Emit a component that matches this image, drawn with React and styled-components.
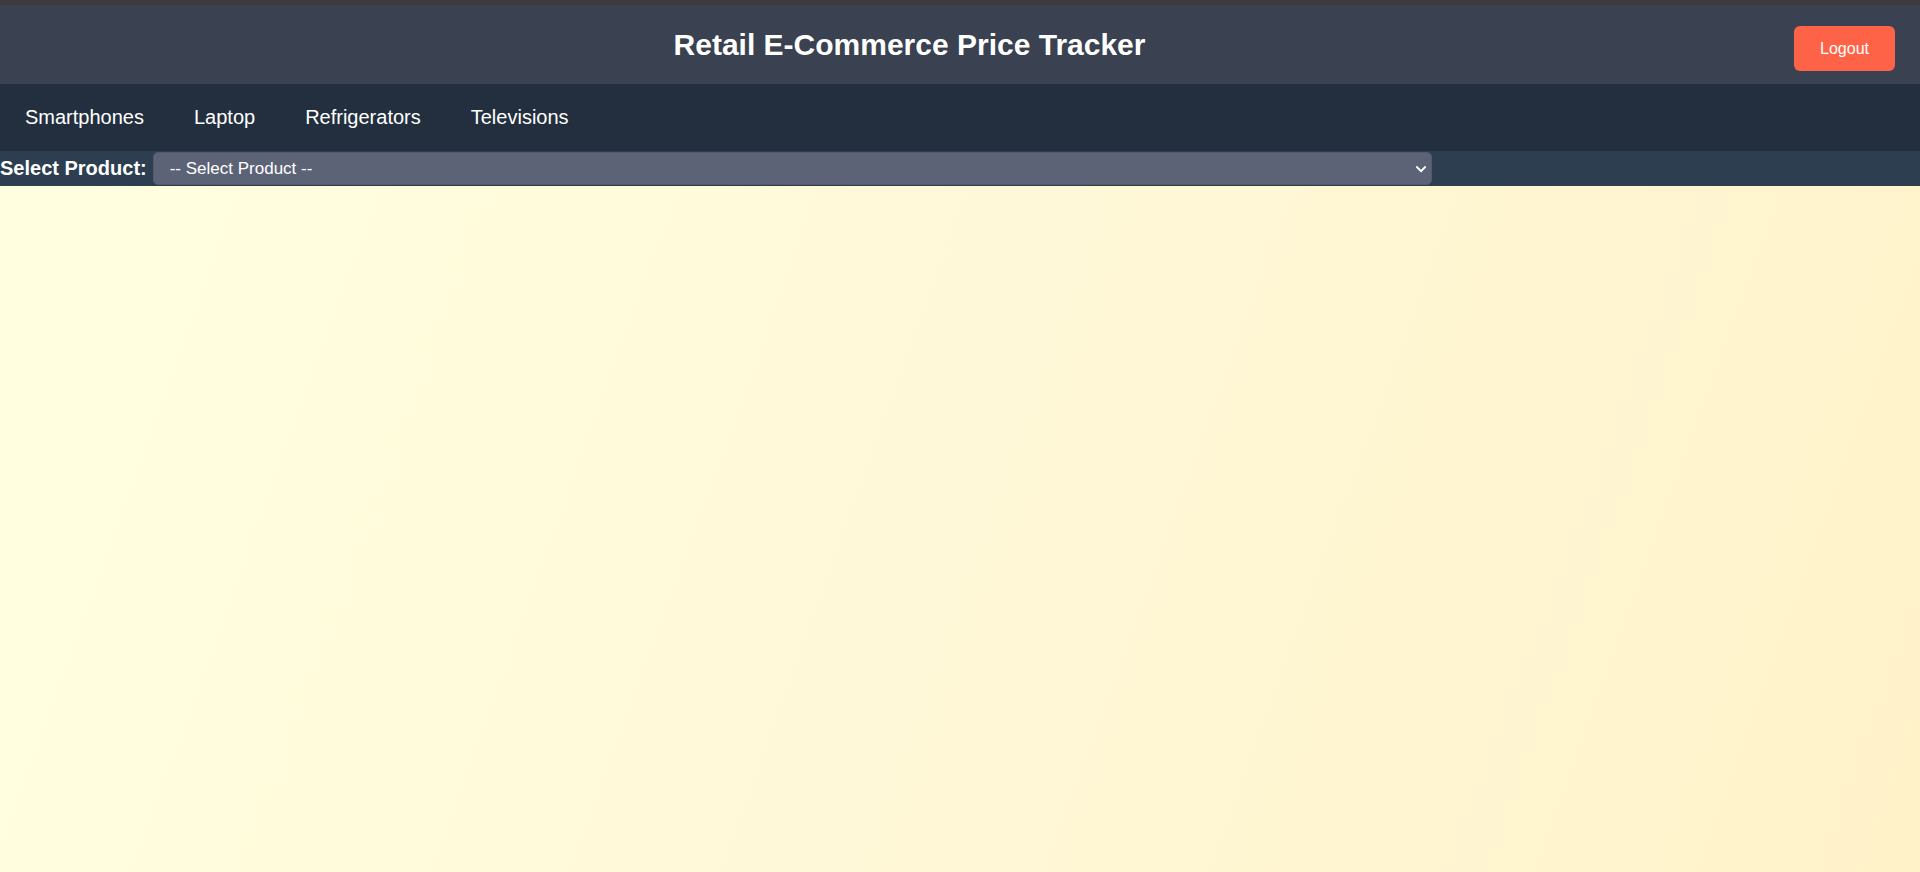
import React from "react";
import styled, { createGlobalStyle } from "styled-components";

const GlobalStyle = createGlobalStyle`
  * { box-sizing: border-box; }
  html, body { margin: 0; padding: 0; }
  body {
    font-family: "Liberation Sans", Arial, sans-serif;
    background: #ffffe0;
  }
`;

const Page = styled.div`
  min-height: 100vh;
  display: flex;
  flex-direction: column;
  background: linear-gradient(110deg, #ffffe0 0%, #fff8d8 50%, #fff2c9 100%);
`;

const TopStrip = styled.div`
  height: 5px;
  background: #3b3b3b;
`;

const Header = styled.header`
  height: 79px;
  display: flex;
  align-items: center;
  padding: 0 25px;
  background: #3a4150;
`;

const Title = styled.h1`
  flex: 1;
  margin: 0;
  text-align: center;
  color: #ffffff;
  font-size: 30px;
  font-weight: 700;
`;

const LogoutButton = styled.button`
  margin-top: 8px;
  padding: 0 26px;
  height: 45px;
  border: none;
  border-radius: 6px;
  background: #ff6347;
  color: #ffffff;
  font-family: "Liberation Sans", Arial, sans-serif;
  font-size: 16px;
  cursor: pointer;
`;

const Nav = styled.nav`
  height: 67px;
  display: flex;
  align-items: center;
  background: #232f3e;
`;

const NavItem = styled.a`
  padding: 0 25px;
  color: #ffffff;
  font-size: 20px;
  text-decoration: none;
  cursor: pointer;
`;

const SelectRow = styled.div`
  height: 35px;
  display: flex;
  align-items: center;
  gap: 6px;
  background: #2c3e50;
`;

const Label = styled.label`
  color: #ffffff;
  font-size: 20px;
  font-weight: 700;
`;

const SelectWrap = styled.div`
  position: relative;
  display: flex;
  width: 1279px;
`;

const ProductSelect = styled.select`
  appearance: none;
  -webkit-appearance: none;
  width: 100%;
  height: 33px;
  padding: 0 30px 0 16px;
  border: 1px solid #545a6c;
  border-radius: 5px;
  background-color: #5d6377;
  color: #ffffff;
  font-family: "Liberation Sans", Arial, sans-serif;
  font-size: 17px;
  outline: none;
`;

const Chevron = styled.svg`
  position: absolute;
  right: 6px;
  top: 50%;
  width: 10px;
  height: 7px;
  margin-top: -3px;
  pointer-events: none;
`;

const Main = styled.main`
  flex: 1;
`;

const categories = ["Smartphones", "Laptop", "Refrigerators", "Televisions"];

export default function App() {
  return (
    <>
      <GlobalStyle />
      <Page>
        <TopStrip />
        <Header>
          <Title>Retail E-Commerce Price Tracker</Title>
          <LogoutButton>Logout</LogoutButton>
        </Header>
        <Nav>
          {categories.map((c) => (
            <NavItem key={c}>{c}</NavItem>
          ))}
        </Nav>
        <SelectRow>
          <Label htmlFor="product">Select Product:</Label>
          <SelectWrap>
            <ProductSelect id="product" defaultValue="">
              <option value="">-- Select Product --</option>
            </ProductSelect>
            <Chevron viewBox="0 0 10 7">
              <path
                d="M1 1.2 L5 5.2 L9 1.2"
                fill="none"
                stroke="#ffffff"
                strokeWidth="2"
                strokeLinecap="square"
              />
            </Chevron>
          </SelectWrap>
        </SelectRow>
        <Main />
      </Page>
    </>
  );
}
